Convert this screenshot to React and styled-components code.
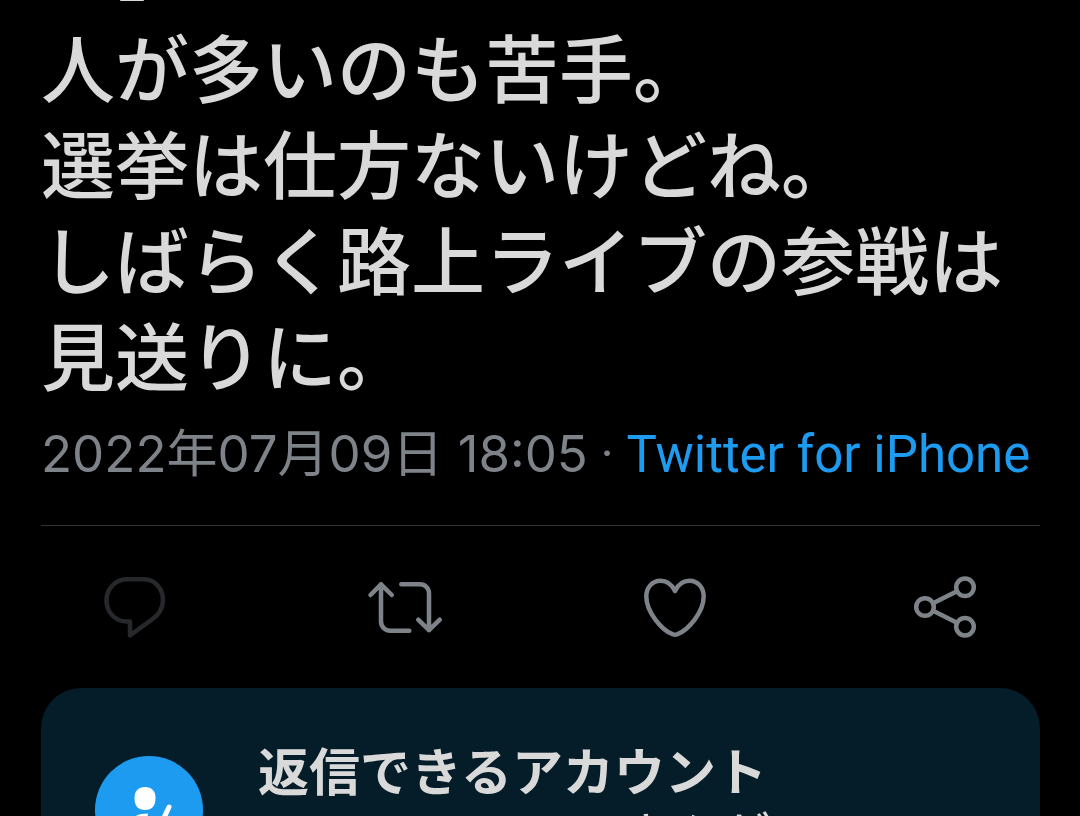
import React from 'react';
import styled, { createGlobalStyle } from 'styled-components';

const lines = [
    '人が多いのも苦手。',
    '選挙は仕方ないけどね。',
    'しばらく路上ライブの参戦は見送りに。'
];

const actions = [
    { label: '返信', icon: <ReplyIcon />, muted: true },
    { label: 'リツイート', icon: <RetweetIcon /> },
    { label: 'いいね', icon: <HeartIcon /> },
    { label: '共有', icon: <ShareIcon /> }
];

const App = () => {
    return (
        <Page>
            <GlobalStyle />
            <Previous />
            <Content>
                <TweetText>
                    {lines.map((line) => (
                        <p key={line}>{line}</p>
                    ))}
                </TweetText>
                <Meta>
                    <time dateTime="2022-07-09T18:05">2022年07月09日 18:05</time>
                    {' · '}
                    <a href="#source">Twitter for iPhone</a>
                </Meta>
            </Content>

            <Actions>
                {actions.map(({ label, icon, muted }) => (
                    <ActionButton key={label} type="button" aria-label={label} disabled={muted} $muted={muted}>
                        {icon}
                    </ActionButton>
                ))}
            </Actions>

            <ReplyCard>
                <Badge>
                    <PersonIcon />
                </Badge>
                <CardText>
                    <h2>返信できるアカウント</h2>
                    <p><Mention />さんが</p>
                </CardText>
            </ReplyCard>
        </Page>
    );
};

function ReplyIcon() {
    return (
        <Icon viewBox="0 0 80 80">
            <path d="M32 12.3H49C60 12.3 68 22 68 33C68 41 64 47.5 57 52.5L35 68.3V54.5H32C20 54.5 11.5 45 11.5 33.4C11.5 21.8 20.5 12.3 32 12.3Z" />
        </Icon>
    );
}

function RetweetIcon() {
    return (
        <Icon viewBox="0 0 80 80">
            <path d="M5.5 28L16 17.3L26.8 28M16 17.3V54.5C16 59.5 20 63.7 25 63.7H44.3" />
            <path d="M36.3 17.3H55C60 17.3 64 21 64 26.3V63.2M53.2 52.7L64 63.2L74.8 52.7" />
        </Icon>
    );
}

function HeartIcon() {
    return (
        <Icon viewBox="0 0 80 80">
            <path d="M40 24C37 17.5 31.5 13.7 25.3 13.7C17 13.7 11.3 21 11.3 29.5C11.3 45 27 63.5 38 67.3Q40 68 42 67.3C53 63.5 68.7 45 68.7 29.5C68.7 21 63 13.7 54.7 13.7C48.5 13.7 43 17.5 40 24Z" />
        </Icon>
    );
}

function ShareIcon() {
    return (
        <Icon viewBox="0 0 80 80">
            <circle cx="20" cy="40" r="8.8" />
            <circle cx="60" cy="20.3" r="8.8" />
            <circle cx="60" cy="59.7" r="8.8" />
            <path d="M28.5 36L52 24.3M28.5 44L52 55.7" />
        </Icon>
    );
}

function PersonIcon() {
    return (
        <svg width="108" height="108" viewBox="0 0 108 108" fill="#fff" aria-hidden="true">
            <path d="M50 31C57 31 60.5 35 60.5 42C60.5 50 57 54 50 54C43 54 39.5 50 39.5 42C39.5 35 43 31 50 31Z" />
            <path d="M53 57.5C43 57.5 34 61 32 72V78H50Z" />
            <path d="M74 51L62 77" fill="none" stroke="#fff" strokeWidth="5" strokeLinecap="round" />
        </svg>
    );
}

const GlobalStyle = createGlobalStyle`
  * {
    box-sizing: border-box;
  }

  body {
    margin: 0;
    background: #000;
  }

  h2, p {
    margin: 0;
  }
`;

const Page = styled.main`
  height: 100vh;
  overflow: hidden;
  background: #000;
  color: #d9d9d9;
  font-family: Roboto, "Noto Sans CJK JP", sans-serif;
`;

/* Lower edge of the line that has scrolled out of view */
const Previous = styled.div`
  width: 24px;
  height: 1px;
  margin-left: 120px;
  border-radius: 0 0 12px 12px;
  background: #d9d9d9;
`;

const Content = styled.article`
  margin: 0 40px 0 41px;
  padding: 16px 0 30px;
  border-bottom: 1px solid #2f3336;
`;

const TweetText = styled.div`
  margin-bottom: 13px;
  font-family: "Noto Sans CJK JP", sans-serif;
  font-size: 74px;
  font-weight: 500;
  line-height: 96px;
`;

const Meta = styled.div`
  font-size: 51px;
  line-height: 80px;
  color: #7e838a;
  white-space: nowrap;

  time {
    font-family: Inter, "Noto Sans CJK JP", sans-serif;
  }

  a {
    color: #1d9bf0;
    text-decoration: none;
  }
`;

const Actions = styled.div`
  display: grid;
  grid-template-columns: repeat(4, 1fr);
  justify-items: center;
  padding: 41px 0;
`;

const ActionButton = styled.button`
  display: flex;
  padding: 0;
  border: 0;
  background: none;
  color: ${({ $muted }) => ($muted ? '#26282b' : '#7e838a')};
  cursor: pointer;
`;

const Icon = styled.svg.attrs({ 'aria-hidden': true })`
  width: 80px;
  height: 80px;
  fill: none;
  stroke: currentColor;
  stroke-width: 4.5;
  stroke-linecap: round;
  stroke-linejoin: round;
`;

const ReplyCard = styled.section`
  display: flex;
  gap: 55px;
  margin: 0 40px 0 41px;
  padding: 49px 54px;
  border-radius: 40px;
  background: #051c29;
`;

const Badge = styled.div`
  flex: none;
  height: 108px;
  margin-top: 19px;
  border-radius: 50%;
  background: #1d9bf0;
`;

const CardText = styled.div`
  font-family: "Noto Sans CJK JP", sans-serif;
  font-size: 51px;
  line-height: 64px;
  white-space: nowrap;

  h2 {
    font-size: 51px;
    font-weight: 700;
  }
`;

const Mention = styled.span`
  display: inline-block;
  width: 360px;
`;

export default App;
